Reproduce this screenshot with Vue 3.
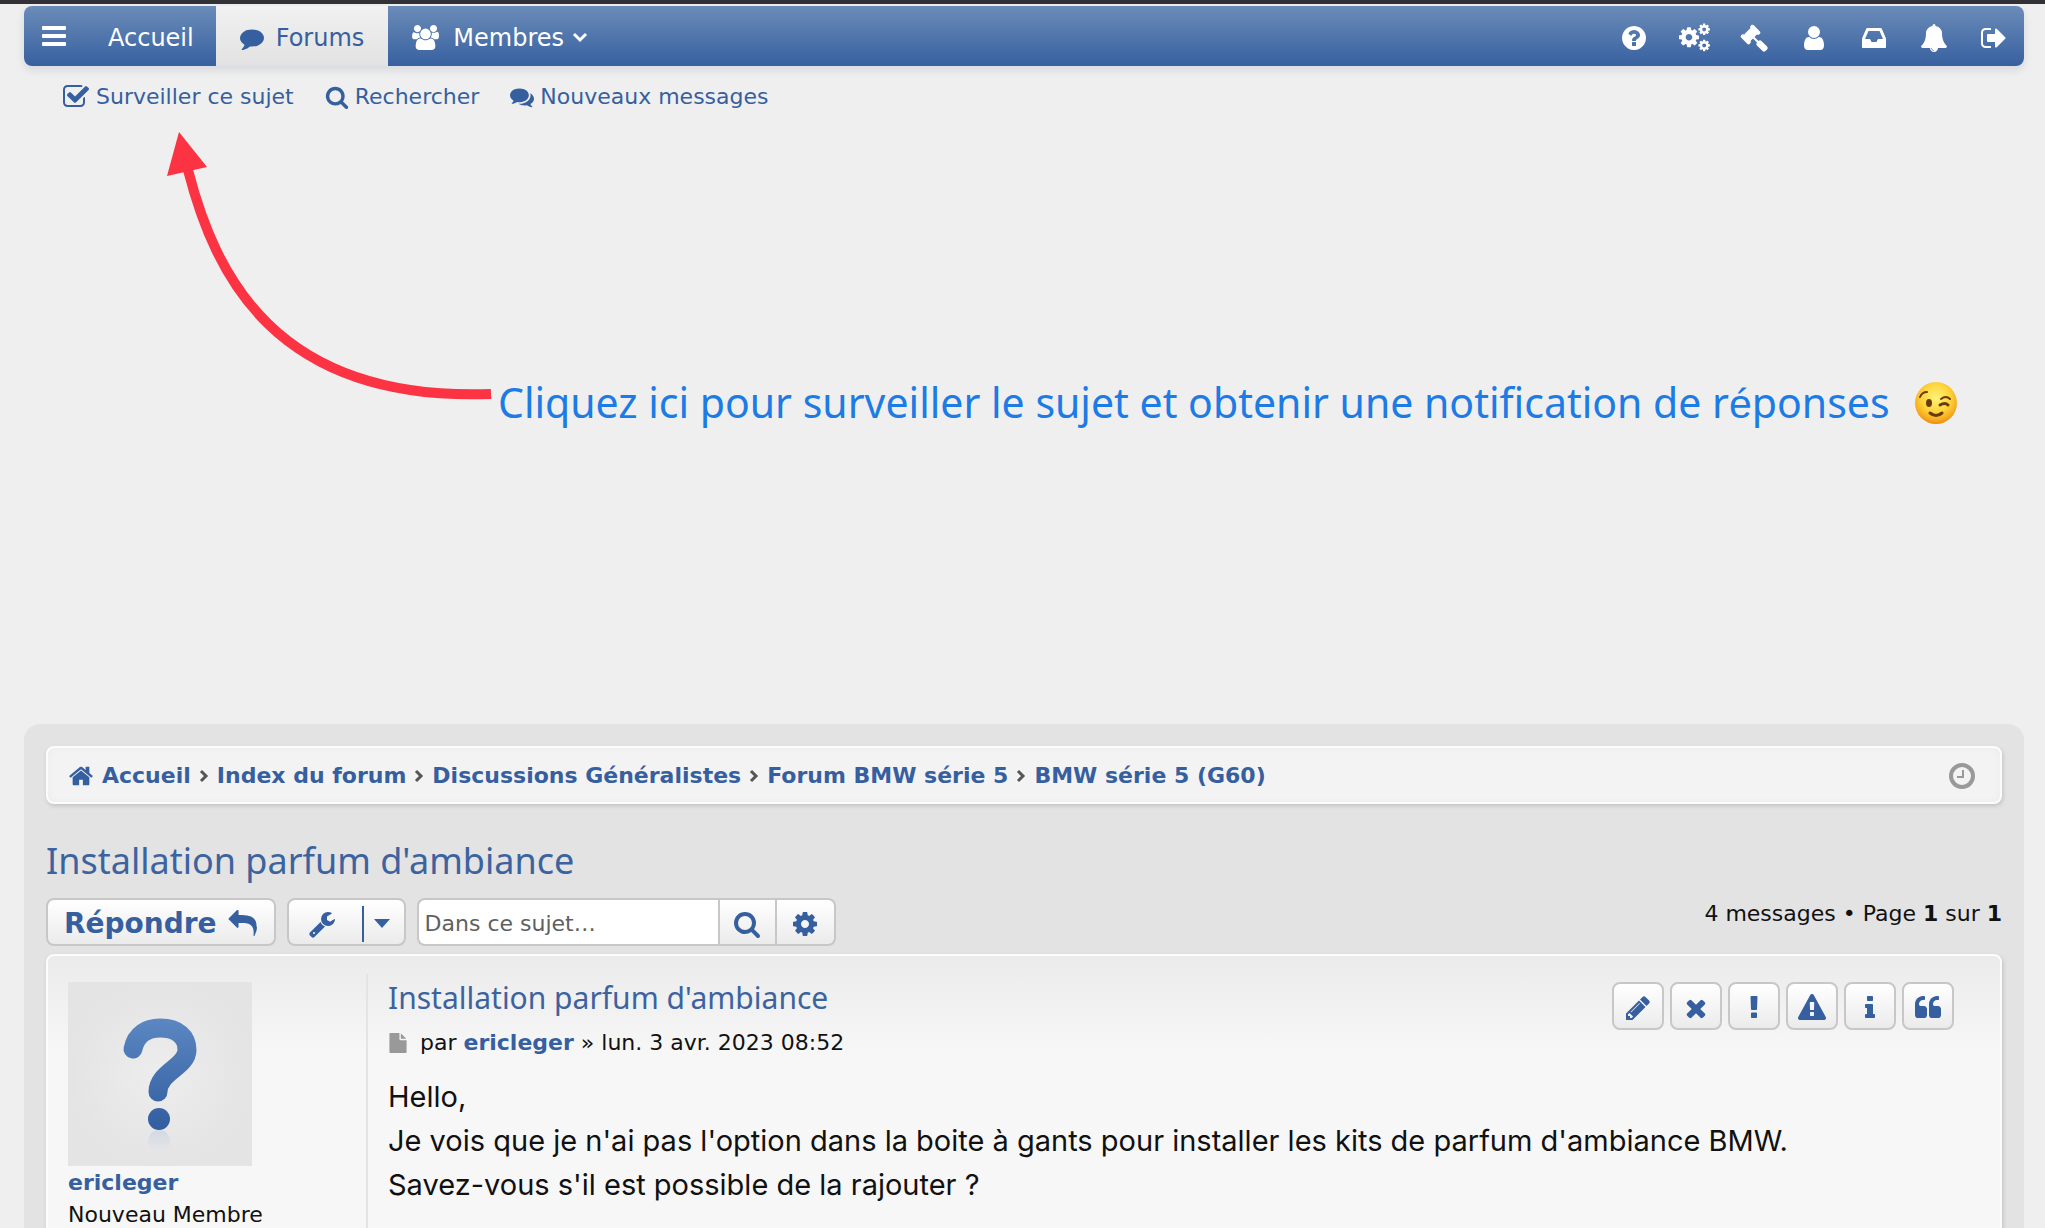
<script setup>
import { h } from 'vue'

const glyphs = {
  bars: ['M1664 1344v128q0 26-19 45t-45 19h-1408q-26 0-45-19t-19-45v-128q0-26 19-45t45-19h1408q26 0 45 19t19 45zM1664 832v128q0 26-19 45t-45 19h-1408q-26 0-45-19t-19-45v-128q0-26 19-45t45-19h1408q26 0 45 19t19 45zM1664 320v128q0 26-19 45t-45 19h-1408q-26 0-45-19t-19-45v-128q0-26 19-45t45-19h1408q26 0 45 19t19 45z'],
  comment: ['M1792 896q0 174-120 321.5t-326 233-450 85.5q-70 0-145-8-198 175-460 242-49 14-114 22-17 2-30.5-9t-17.5-29v-1q-3-4-.5-12t2-10 4.5-9.5l6-9 7-8.5 8-9q7-8 31-34.5t34.5-38 31-39.5 32.5-51 27-59 26-76q-157-89-247.5-220t-90.5-281q0-130 71-248.5t191-204.5 286-136.5 348-50.5q244 0 450 85.5t326 233 120 321.5z'],
  users: ['M593 896q-162 5-265 128h-134q-82 0-138-40.5t-56-118.5q0-353 124-353 6 0 43.5 21t97.5 42.5 119 21.5q67 0 133-23-5 37-5 66 0 159 81 256zM1664 1533q0 120-73 189.5t-194 69.5h-874q-121 0-194-69.5t-73-189.5q0-53 3.5-103.5t14-109 26.5-108.5 43-97.5 62-81 85.5-53.5 111.5-20q10 0 43 21.5t73 48 107 48 135 21.5 135-21.5 107-48 73-48 43-21.5q61 0 111.5 20t85.5 53.5 62 81 43 97.5 26.5 108.5 14 109 3.5 103.5zM640 256q0 106-75 181t-181 75-181-75-75-181 75-181 181-75 181 75 75 181zM1344 640q0 159-112.5 271.5t-271.5 112.5-271.5-112.5-112.5-271.5 112.5-271.5 271.5-112.5 271.5 112.5 112.5 271.5zM1920 865q0 78-56 118.5t-138 40.5h-134q-103-123-265-128 90-128 90-287 0-29-5-66 66 23 133 23 59 0 119-21.5t97.5-42.5 43.5-21q124 0 124 353zM1792 256q0 106-75 181t-181 75-181-75-75-181 75-181 181-75 181 75 75 181z'],
  question: ['M1024 1376v-192q0-14-9-23t-23-9h-192q-14 0-23 9t-9 23v192q0 14 9 23t23 9h192q14 0 23-9t9-23zm256-672q0-88-55.5-163t-138.5-116-170-41q-243 0-371 213-15 24 8 42l132 100q7 6 19 6 16 0 25-12 53-68 86-92 34-24 86-24 48 0 85.5 26t37.5 59q0 38-20 61t-68 45q-63 28-115.5 86.5t-52.5 125.5v36q0 14 9 23t23 9h192q14 0 23-9t9-23q0-19 21.5-49.5t54.5-49.5q32-18 49-28.5t46-35 44.5-48 28-60.5 12.5-81zm384 192q0 209-103 385.5t-279.5 279.5-385.5 103-385.5-103-279.5-279.5-103-385.5 103-385.5 279.5-279.5 385.5-103 385.5 103 279.5 279.5 103 385.5z'],
  cog: ['M1152 896q0-106-75-181t-181-75-181 75-75 181 75 181 181 75 181-75 75-181zm512-109v222q0 12-8 23t-20 13l-185 28q-19 54-39 91 35 50 107 138 10 12 10 25t-9 23q-27 37-99 108t-94 71q-12 0-26-9l-138-108q-44 23-91 38-16 136-29 186-7 28-36 28h-222q-14 0-24.5-8.5t-11.5-21.5l-28-184q-49-16-90-37l-141 107q-10 9-25 9-14 0-25-11-126-114-165-168-7-10-7-23 0-12 8-23 15-21 51-66.5t54-70.5q-27-50-41-99l-183-27q-13-2-21-12.5t-8-23.5v-222q0-12 8-23t19-13l186-28q14-46 39-92-40-57-107-138-10-12-10-24 0-10 9-23 26-36 98.5-107.5t94.5-71.5q13 0 26 10l138 107q44-23 91-38 16-136 29-186 7-28 36-28h222q14 0 24.5 8.5t11.5 21.5l28 184q49 16 90 37l142-107q9-9 24-9 13 0 25 10 129 119 165 170 7 8 7 22 0 12-8 23-15 21-51 66.5t-54 70.5q26 50 41 98l183 28q13 2 21 12.5t8 23.5z'],
  gavel: ['M1771 1536q0 53-37 90l-107 108q-39 37-91 37-53 0-90-37l-363-364q-38-36-38-90 0-53 43-96l-256-256-126 126q-14 14-34 14t-34-14q2 2 12.5 12t12.5 13 10 11.5 10 13.5 6 13.5 5.5 16.5 1.5 18q0 38-28 68-3 3-16.5 18t-19 20.5-18.5 16.5-22 15.5-22 9-26 4.5q-40 0-68-28l-408-408q-28-28-28-68 0-13 4.5-26t9-22 15.5-22 16.5-18.5 20.5-19 18-16.5q30-28 68-28 10 0 18 1.5t16.5 5.5 13.5 6 13.5 10 11.5 10 13 12.5 12 12.5q-14-14-14-34t14-34l348-348q14-14 34-14t34 14q-2-2-12.5-12t-12.5-13-10-11.5-10-13.5-6-13.5-5.5-16.5-1.5-18q0-38 28-68 3-3 16.5-18t19-20.5 18.5-16.5 22-15.5 22-9 26-4.5q40 0 68 28l408 408q28 28 28 68 0 13-4.5 26t-9 22-15.5 22-16.5 18.5-20.5 19-18 16.5q-30 28-68 28-10 0-18-1.5t-16.5-5.5-13.5-6-13.5-10-11.5-10-13-12.5-12-12.5q14 14 14 34t-14 34l-126 126 256 256q43-43 96-43 52 0 91 37l363 363q37 39 37 91z'],
  user: ['M1536 1399q0 109-62.5 187t-150.5 78h-854q-88 0-150.5-78t-62.5-187q0-85 8.5-160.5t31.5-152 58.5-131 94-89 134.5-34.5q131 128 313 128t313-128q76 0 134.5 34.5t94 89 58.5 131 31.5 152 8.5 160.5zm-256-887q0 159-112.5 271.5t-271.5 112.5-271.5-112.5-112.5-271.5 112.5-271.5 271.5-112.5 271.5 112.5 112.5 271.5z'],
  inbox: ['M1151 960h316q-1-3-2.5-8.5t-2.5-7.5l-212-496h-708l-212 496q-1 3-2.5 8.5t-2.5 7.5h316l95 192h320zm513 30v482q0 26-19 45t-45 19h-1408q-26 0-45-19t-19-45v-482q0-62 25-123l238-552q10-25 36.5-42t52.5-17h832q26 0 52.5 17t36.5 42l238 552q25 61 25 123z'],
  bell: ['M912 1696q0-16-16-16-59 0-101.5-42.5t-42.5-101.5q0-16-16-16t-16 16q0 73 51.5 124.5t124.5 51.5q16 0 16-16zm816-288q0 52-38 90t-90 38h-448q0 106-75 181t-181 75-181-75-75-181h-448q-52 0-90-38t-38-90q50-42 91-88t85-119.5 74.5-158.5 50-206 19.5-260q0-152 117-282.5t307-158.5q-8-19-8-39 0-40 28-68t68-28 68 28 28 68q0 20-8 39 190 28 307 158.5t117 282.5q0 139 19.5 260t50 206 74.5 158.5 85 119.5 91 88z'],
  signout: ['M704 1440q0 4 1 20t.5 26.5-3 23.5-10 19.5-20.5 6.5h-320q-119 0-203.5-84.5t-84.5-203.5v-704q0-119 84.5-203.5t203.5-84.5h320q13 0 22.5 9.5t9.5 22.5q0 4 1 20t.5 26.5-3 23.5-10 19.5-20.5 6.5h-320q-66 0-113 47t-47 113v704q0 66 47 113t113 47h312l11.5 1 11.5 3 8 5.5 7 9 2 13.5zm928-544q0 26-19 45l-544 544q-19 19-45 19t-45-19-19-45v-288h-448q-26 0-45-19t-19-45v-384q0-26 19-45t45-19h448v-288q0-26 19-45t45-19 45 19l544 544q19 19 19 45z'],
  check: ['M1472 930v318q0 119-84.5 203.5t-203.5 84.5h-832q-119 0-203.5-84.5t-84.5-203.5v-832q0-119 84.5-203.5t203.5-84.5h832q63 0 117 25 15 7 18 23 3 17-9 29l-49 49q-10 10-23 10-3 0-9-2-23-6-45-6h-832q-66 0-113 47t-47 113v832q0 66 47 113t113 47h832q66 0 113-47t47-113v-254q0-13 9-22l64-64q10-10 23-10 6 0 12 3 20 8 20 29zm231-489l-814 814q-24 24-57 24t-57-24l-430-430q-24-24-24-57t24-57l110-110q24-24 57-24t57 24l263 263 647-647q24-24 57-24t57 24l110 110q24 24 24 57t-24 57z'],
  search: ['M1216 832q0-185-131.5-316.5t-316.5-131.5-316.5 131.5-131.5 316.5 131.5 316.5 316.5 131.5 316.5-131.5 131.5-316.5zm512 832q0 52-38 90t-90 38q-54 0-90-38l-343-342q-179 124-399 124-143 0-273.5-55.5t-225-150-150-225-55.5-273.5 55.5-273.5 150-225 225-150 273.5-55.5 273.5 55.5 225 150 150 225 55.5 273.5q0 220-124 399l343 343q37 37 37 90z'],
  comments: ['M1408 768q0 139-94 257t-256.5 186.5-353.5 68.5q-86 0-176-16-124 88-278 128-36 9-86 16h-3q-11 0-20.5-8t-11.5-21q-1-3-1-6.5t.5-6.5 2-6l2.5-5 3.5-5.5 4-5 4.5-5 4-4.5q5-6 23-25t26-29.5 22.5-29 25-38.5 20.5-44q-124-72-195-177t-71-224q0-139 94-257t256.5-186.5 353.5-68.5 353.5 68.5 256.5 186.5 94 257zm384 256q0 120-71 224.5t-195 176.5q10 24 20.5 44t25 38.5 22.5 29 26 29.5 23 25q1 1 4 4.5t4.5 5 4 5 3.5 5.5l2.5 5 2 6 .5 6.5-1 6.5q-3 14-13 22t-22 7q-50-7-86-16-154-40-278-128-90 16-176 16-271 0-472-132 58 4 88 4 161 0 309-45t264-129q125-92 192-212t67-254q0-77-23-152 129 71 204 178t75 230z'],
  home: ['M1472 992v480q0 26-19 45t-45 19h-384v-384h-256v384h-384q-26 0-45-19t-19-45v-480q0-1 .5-3t.5-3l575-474 575 474q1 2 1 6zm223-69l-62 74q-8 9-21 11h-3q-13 0-21-7l-692-577-692 577q-12 8-24 7-13-2-21-11l-62-74q-8-10-7-23.5t11-21.5l719-599q32-26 76-26t76 26l244 204v-195q0-14 9-23t23-9h192q14 0 23 9t9 23v408l219 182q10 8 11 21.5t-7 23.5z'],
  reply: ['M1792 1120q0 166-127 451-3 7-10.5 24t-13.5 30-13 22q-12 17-28 17-15 0-23.5-10t-8.5-25q0-9 2.5-26.5t2.5-23.5q5-68 5-123 0-112-19.5-200.5t-54-153.5-89-112-112-80-138.5-52-155-25-176-7h-224v256q0 26-19 45t-45 19-45-19l-512-512q-19-19-19-45t19-45l512-512q19-19 45-19t45 19 19 45v256h224q713 0 875 403 53 134 53 333z'],
  wrench: ['M448 1472q0-26-19-45t-45-19-45 19-19 45 19 45 45 19 45-19 19-45zm644-420l-682 682q-37 37-90 37-52 0-91-37l-106-108q-38-36-38-90 0-53 38-91l681-681q39 98 114.5 173.5t173.5 114.5zm634-435q0 39-23 106-47 134-164.5 217.5t-258.5 83.5q-185 0-316.5-131.5t-131.5-316.5 131.5-316.5 316.5-131.5q58 0 121.5 16.5t107.5 46.5q16 11 16 28t-16 28l-293 169v224l193 107q5-3 79-48.5t135.5-81 70.5-35.5q15 0 23.5 10t8.5 25z'],
  pencil: ['M491 1536l91-91-235-235-91 91v107h128v128h107zm523-928q0-22-22-22-10 0-17 7l-542 542q-7 7-7 17 0 22 22 22 10 0 17-7l542-542q7-7 7-17zm-54-192l416 416-832 832h-416v-416zm683 96q0 53-37 90l-166 166-416-416 166-165q36-38 90-38 53 0 91 38l235 234q37 39 37 91z'],
  times: ['M1490 1322q0 40-28 68l-136 136q-28 28-68 28t-68-28l-294-294-294 294q-28 28-68 28t-68-28l-136-136q-28-28-28-68t28-68l294-294-294-294q-28-28-28-68t28-68l136-136q28-28 68-28t68 28l294 294 294-294q28-28 68-28t68 28l136 136q28 28 28 68t-28 68l-294 294 294 294q28 28 28 68z'],
  exclamation: ['M1088 1248v224q0 26-19 45t-45 19h-256q-26 0-45-19t-19-45v-224q0-26 19-45t45-19h256q26 0 45 19t19 45zm30-1056l-28 768q-1 26-20.5 45t-45.5 19h-256q-26 0-45.5-19t-20.5-45l-28-768q-1-26 17.5-45t44.5-19h320q26 0 44.5 19t17.5 45z'],
  warning: ['M1024 1375v-190q0-14-9.5-23.5t-22.5-9.5h-192q-13 0-22.5 9.5t-9.5 23.5v190q0 14 9.5 23.5t22.5 9.5h192q13 0 22.5-9.5t9.5-23.5zm-2-374l18-459q0-12-10-19-13-11-24-11h-220q-11 0-24 11-10 7-10 21l17 457q0 10 10 16.5t24 6.5h185q14 0 23.5-6.5t10.5-16.5zm-14-934l768 1408q35 63-2 126-17 29-46.5 46t-63.5 17h-1536q-34 0-63.5-17t-46.5-46q-37-63-2-126l768-1408q17-31 47-49t65-18 65 18 47 49z'],
  info: ['M1216 1344v128q0 26-19 45t-45 19h-512q-26 0-45-19t-19-45v-128q0-26 19-45t45-19h64v-384h-64q-26 0-45-19t-19-45v-128q0-26 19-45t45-19h384q26 0 45 19t19 45v576h64q26 0 45 19t19 45zm-128-1152v192q0 26-19 45t-45 19h-256q-26 0-45-19t-19-45v-192q0-26 19-45t45-19h256q26 0 45 19t19 45z'],
  quote: ['M832 960v384q0 80-56 136t-136 56h-384q-80 0-136-56t-56-136v-704q0-104 40.5-198.5t109.5-163.5 163.5-109.5 198.5-40.5h64q26 0 45 19t19 45v128q0 26-19 45t-45 19h-64q-106 0-181 75t-75 181v32q0 40 28 68t68 28h224q80 0 136 56t56 136zm896 0v384q0 80-56 136t-136 56h-384q-80 0-136-56t-56-136v-704q0-104 40.5-198.5t109.5-163.5 163.5-109.5 198.5-40.5h64q26 0 45 19t19 45v128q0 26-19 45t-45 19h-64q-106 0-181 75t-75 181v32q0 40 28 68t68 28h224q80 0 136 56t56 136z'],
  file: ['M1152 512v-472q22 14 36 28l408 408q14 14 28 36h-472zm-128 32q0 40 28 68t68 28h544v1056q0 40-28 68t-68 28h-1344q-40 0-68-28t-28-68v-1600q0-40 28-68t68-28h800v544z'],
}

const views = { users: '0 0 1920 1792', cogs: '0 0 1920 1792' }

const Icon = (props) => {
  const size = Number(props.size || 28)
  const wide = views[props.name]
  const body = props.name === 'cogs'
    ? [[-105, 105, 0.83], [1180, -90, 0.48], [1180, 940, 0.48]].map(([x, y, s]) =>
        h('path', { d: glyphs.cog[0], transform: `translate(${x} ${y}) scale(${s})` }))
    : glyphs[props.name].map((d) => h('path', { d }))
  return h('svg', {
    width: wide ? Math.round(size * 1920 / 1792) : size,
    height: size,
    viewBox: wide || '0 0 1792 1792',
    fill: 'currentColor',
    overflow: 'visible',
    'aria-hidden': 'true',
  }, body)
}
Icon.props = ['name', 'size']

const tools = [
  ['question', 'FAQ'], ['cogs', 'Administration'], ['gavel', 'Modération'], ['user', 'Profil'],
  ['inbox', 'Messages privés'], ['bell', 'Notifications'], ['signout', 'Déconnexion'],
]
const crumbs = ['Index du forum', 'Discussions Généralistes', 'Forum BMW série 5', 'BMW série 5 (G60)']
const postActions = [
  ['pencil', 'Modifier'], ['times', 'Supprimer'], ['exclamation', 'Signaler'],
  ['warning', 'Avertir'], ['info', 'Informations'], ['quote', 'Citer'],
]
</script>

<template>
  <div class="page">
    <nav class="navbar">
      <button class="menu" aria-label="Menu"><Icon name="bars" /></button>
      <a class="home" href="#">Accueil</a>
      <a class="tab active" href="#"><Icon name="comment" size="24" />Forums</a>
      <a class="tab members" href="#">
        <Icon name="users" size="25" />Membres
        <svg class="chev" width="16" height="12" viewBox="0 0 16 12" aria-hidden="true"><path d="M2 2l6 6 6-6" /></svg>
      </a>
      <div class="tools">
        <a v-for="[icon, label] in tools" :key="icon" href="#" :aria-label="label"><Icon :name="icon" /></a>
      </div>
    </nav>

    <div class="sublinks">
      <a href="#"><Icon name="check" />Surveiller ce sujet</a>
      <a href="#"><Icon name="search" size="24" />Rechercher</a>
      <a href="#"><Icon name="comments" size="24" />Nouveaux messages</a>
    </div>

    <section class="callout">
      <svg class="arrow" width="340" height="290" viewBox="160 120 340 290" aria-hidden="true">
        <path d="M188 170C215 275 275 402 491 394" fill="none" stroke="#fb3343" stroke-width="10" />
        <path d="M179 132L207 167L167 176Z" fill="#fb3343" />
      </svg>
      <p>Cliquez ici pour surveiller le sujet et obtenir une notification de r<span class="accent">é</span>ponses</p>
      <svg class="wink" width="44" height="44" viewBox="0 0 44 44" role="img" aria-label="Clin d'œil">
        <defs>
          <radialGradient id="face" cx="50%" cy="38%" r="62%">
            <stop offset="0" stop-color="#fff27a" />
            <stop offset=".55" stop-color="#fdd53a" />
            <stop offset=".85" stop-color="#f7ab1e" />
            <stop offset="1" stop-color="#e98a12" />
          </radialGradient>
        </defs>
        <circle cx="22" cy="22" r="21" fill="url(#face)" />
        <g fill="none" stroke="#6b3a0c" stroke-width="2" stroke-linecap="round">
          <path d="M6 16q2-5 7-5" />
          <path d="M27 18q5-4 9 0" />
          <path d="M26 24q5-3 8 0" stroke-width="3" />
          <path d="M16 32q6 5 12 0" stroke-width="3" />
        </g>
        <ellipse cx="15" cy="22" rx="3" ry="4" fill="#6b3a0c" />
      </svg>
    </section>

    <main class="board">
      <nav class="crumbs" aria-label="Fil d'Ariane">
        <a class="first" href="#"><Icon name="home" size="26" />Accueil</a>
        <template v-for="c in crumbs" :key="c">
          <svg class="sep" width="10" height="14" viewBox="0 0 10 14" aria-hidden="true"><path d="M2 2l5 5-5 5" /></svg>
          <a href="#">{{ c }}</a>
        </template>
        <svg class="clock" width="28" height="28" viewBox="0 0 28 28" aria-hidden="true">
          <circle cx="14" cy="14" r="11" stroke-width="4" />
          <path d="M15 8v7h-6" stroke-width="2" />
        </svg>
      </nav>

      <h1><a href="#">Installation parfum d'ambiance</a></h1>

      <div class="actionbar">
        <button class="btn reply">Répondre <Icon name="reply" /></button>
        <button class="btn wrench" aria-label="Outils du sujet">
          <Icon name="wrench" />
          <span class="drop"><svg width="16" height="9" viewBox="0 0 16 9" aria-hidden="true"><path d="M0 0h16L8 9z" fill="currentColor" /></svg></span>
        </button>
        <form class="search" @submit.prevent>
          <input type="search" aria-label="Rechercher dans ce sujet" placeholder="Dans ce sujet…" />
          <button class="btn" aria-label="Rechercher"><Icon name="search" /></button>
          <button class="btn" type="button" aria-label="Recherche avancée"><Icon name="cog" /></button>
        </form>
        <div class="count">4 messages • Page <strong>1</strong> sur <strong>1</strong></div>
      </div>

      <article class="post">
        <aside>
          <svg class="avatar" width="184" height="184" viewBox="0 0 184 184" role="img" aria-label="Avatar">
            <defs>
              <radialGradient id="tile"><stop offset="0" stop-color="#ededed" /><stop offset="1" stop-color="#e4e4e4" /></radialGradient>
              <linearGradient id="mark" gradientUnits="userSpaceOnUse" x1="0" y1="36" x2="0" y2="148">
                <stop offset="0" stop-color="#5b87c2" /><stop offset="1" stop-color="#325d9f" />
              </linearGradient>
              <linearGradient id="mirror" x1="0" y1="0" x2="0" y2="1">
                <stop offset="0" stop-color="#d3d8e2" /><stop offset="1" stop-color="#e6e6e8" />
              </linearGradient>
            </defs>
            <rect width="184" height="184" fill="url(#tile)" />
            <path d="M65 67C68 52 79 46 92 46C110 46 119 55 119 68C119 85 90 90 90 110" fill="none" stroke="url(#mark)" stroke-width="19" stroke-linecap="round" />
            <circle cx="91" cy="137" r="11" fill="url(#mark)" />
            <circle cx="91" cy="159" r="11" fill="url(#mirror)" />
          </svg>
          <a class="author" href="#">ericleger</a>
          <span>Nouveau Membre</span>
        </aside>
        <div class="body">
          <header>
            <div>
              <h2><a href="#">Installation parfum d'ambiance</a></h2>
              <p class="meta"><Icon name="file" size="20" /><span>par <a class="author" href="#">ericleger</a> » lun. 3 avr. 2023 08:52</span></p>
            </div>
            <div class="actions">
              <button v-for="[icon, label] in postActions" :key="icon" class="btn" :aria-label="label"><Icon :name="icon" /></button>
            </div>
          </header>
          <p class="text">Hello,<br />Je vois que je n'ai pas l'option dans la boite à gants pour installer les kits de parfum d'ambiance BMW.<br />Savez-vous s'il est possible de la rajouter ?</p>
        </div>
      </article>
    </main>
  </div>
</template>

<style>
body { margin: 0; background: #efefef; }
</style>

<style scoped>
* { box-sizing: border-box; }
a { color: inherit; text-decoration: none; }
h1, h2, p { margin: 0; font-weight: 400; }
button { font: inherit; color: inherit; cursor: pointer; }
svg { flex: none; display: block; }

.page {
  position: relative;
  height: 100vh;
  overflow: hidden;
  padding: 2px 21px 0 24px;
  border-top: 4px solid #323136;
  background: #efefef;
  color: #111;
  font: 22px/32px "DejaVu Sans", sans-serif;
}

.navbar {
  display: flex;
  height: 60px;
  border-radius: 8px;
  background: linear-gradient(#6b8cb9, #37609f);
  box-shadow: 0 4px 8px rgba(40, 60, 110, .12);
  color: #fff;
  font-size: 24px;
}
.navbar a { display: flex; align-items: center; padding-top: 3px; }
.menu { width: 60px; padding: 0; border: 0; background: none; display: grid; place-items: center; }
.navbar .home { padding-left: 24px; padding-right: 22px; }
.navbar .tab { gap: 12px; padding-left: 24px; padding-right: 24px; }
.active { background: linear-gradient(#f1f1f1, #e2e2e2); color: #365f9f; }
.navbar .members { gap: 14px; }
.chev { margin-left: -6px; }
.chev path, .sep path { fill: none; stroke: currentColor; stroke-width: 3; }
.tools { display: flex; margin-left: auto; }
.tools a { width: 60px; justify-content: center; }

.sublinks { display: flex; gap: 31px; padding: 15px 38px 0; color: #365f9f; }
.sublinks a { display: flex; align-items: center; gap: 6px; }

.callout {
  display: flex;
  align-items: center;
  gap: 24px;
  height: 611px;
  padding: 0 0 32px 474px;
  color: #1d7be5;
  font: 41px/56px "Noto Sans", sans-serif;
  white-space: nowrap;
}
.accent { font-family: "Liberation Sans", sans-serif; }
.arrow { position: absolute; left: 160px; top: 116px; }

.board { padding: 22px; border-radius: 16px; background: #e3e3e3; min-height: 520px; }
.crumbs {
  display: flex;
  align-items: center;
  gap: 8px;
  height: 58px;
  padding: 2px 24px 0 20px;
  border: 2px solid #fcfcfc;
  border-radius: 8px;
  background: #f3f3f3;
  box-shadow: 1px 2px 4px rgba(0, 0, 0, .14), inset 0 0 8px rgba(0, 0, 0, .03);
  color: #365f9f;
  font-weight: 700;
}
.first { display: flex; align-items: center; gap: 8px; }
.sep { color: #555; }
.clock { margin-left: auto; fill: none; stroke: #999; }

h1 { margin-top: 32px; color: #3c639f; font: 36px/50px "Noto Sans", sans-serif; }
.actionbar { display: flex; gap: 11px; margin-top: 12px; height: 48px; color: #365f9f; }
.btn {
  display: flex;
  align-items: center;
  justify-content: center;
  padding: 3px 0 0;
  border: 2px solid #c7c7c7;
  border-radius: 8px;
  background: linear-gradient(#fff, #ebebeb);
}
.reply { gap: 12px; padding: 3px 17px 0 16px; font-size: 28px; font-weight: 700; }
.wrench { width: 119px; padding-left: 19px; justify-content: space-between; }
.drop { display: flex; align-items: center; height: 36px; width: 42px; padding-left: 10px; border-left: 2px solid #365f9f; }
.search { display: flex; }
.search input {
  width: 301px;
  padding: 3px 6px 0;
  border: 2px solid #c7c7c7;
  border-right: 0;
  border-radius: 8px 0 0 8px;
  background: #fff;
  font: inherit;
}
.search input::placeholder { color: #606060; opacity: 1; }
.search .btn { width: 59px; border-radius: 0; }
.search .btn + .btn { border-left: 0; border-radius: 0 8px 8px 0; }
.count { margin-left: auto; color: #111; }

.post {
  display: flex;
  min-height: 420px;
  margin-top: 8px;
  padding: 18px 46px 18px 20px;
  border: 2px solid #fcfcfc;
  border-radius: 8px;
  background: linear-gradient(#ebebeb, #f7f7f7 100px);
  box-shadow: 1px 2px 4px rgba(0, 0, 0, .16);
}
aside { display: flex; flex-direction: column; width: 300px; padding-top: 8px; border-right: 2px solid #e4e4e4; }
.avatar { margin-bottom: 1px; }
.author { font-weight: 700; color: #365f9f; }
.body { flex: 1; padding: 8px 0 0 20px; }
header { display: flex; justify-content: space-between; }
h2 { color: #3c639f; font: 30px/32px "Noto Sans", sans-serif; }
.meta { display: flex; align-items: center; gap: 12px; margin-top: 13px; }
.meta svg { color: #999; }
.actions { display: flex; gap: 6px; color: #365f9f; }
.actions .btn { width: 52px; height: 48px; }
.text { margin-top: 16px; font: 29px/44px Inter, sans-serif; }
</style>
